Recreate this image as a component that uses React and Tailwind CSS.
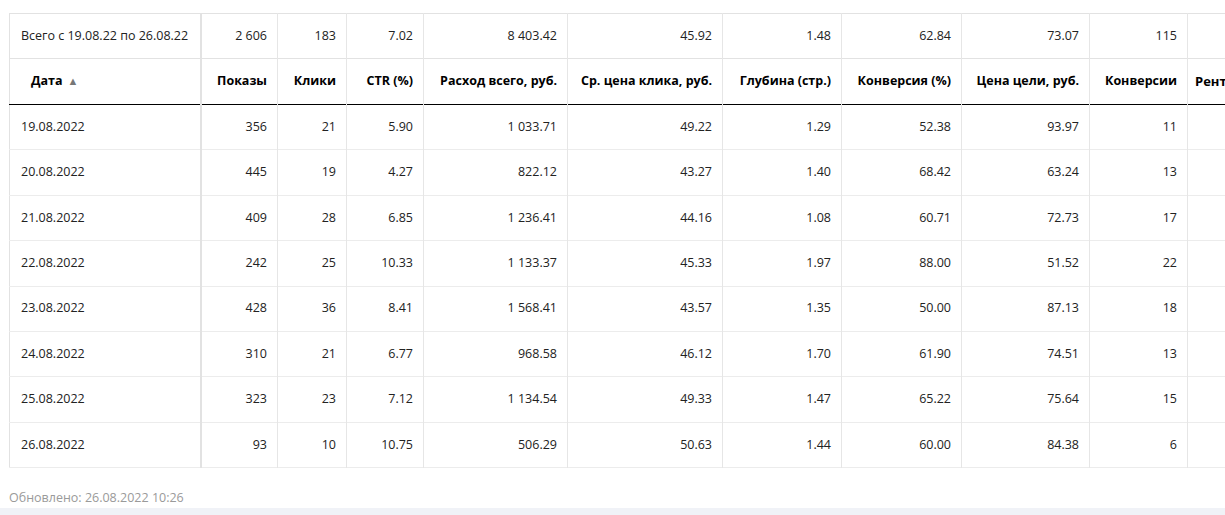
const cols = [
  { key: "date", title: "Дата", w: "w-[191px]" },
  { key: "shows", title: "Показы", w: "w-[77px]" },
  { key: "clicks", title: "Клики", w: "w-[69px]" },
  { key: "ctr", title: "CTR (%)", w: "w-[77px]" },
  { key: "spend", title: "Расход всего, руб.", w: "w-[144px]" },
  { key: "cpc", title: "Ср. цена клика, руб.", w: "w-[155px]" },
  { key: "depth", title: "Глубина (стр.)", w: "w-[119px]" },
  { key: "conv", title: "Конверсия (%)", w: "w-[120px]" },
  { key: "cpa", title: "Цена цели, руб.", w: "w-[128px]" },
  { key: "convs", title: "Конверсии", w: "w-[98px]" },
  { key: "rev", title: "Рентабельность", w: "w-[160px]" },
];

const total = ["Всего с 19.08.22 по 26.08.22", "2 606", "183", "7.02", "8 403.42", "45.92", "1.48", "62.84", "73.07", "115", ""];

const rows = [
  ["19.08.2022", "356", "21", "5.90", "1 033.71", "49.22", "1.29", "52.38", "93.97", "11", ""],
  ["20.08.2022", "445", "19", "4.27", "822.12", "43.27", "1.40", "68.42", "63.24", "13", ""],
  ["21.08.2022", "409", "28", "6.85", "1 236.41", "44.16", "1.08", "60.71", "72.73", "17", ""],
  ["22.08.2022", "242", "25", "10.33", "1 133.37", "45.33", "1.97", "88.00", "51.52", "22", ""],
  ["23.08.2022", "428", "36", "8.41", "1 568.41", "43.57", "1.35", "50.00", "87.13", "18", ""],
  ["24.08.2022", "310", "21", "6.77", "968.58", "46.12", "1.70", "61.90", "74.51", "13", ""],
  ["25.08.2022", "323", "23", "7.12", "1 134.54", "49.33", "1.47", "65.22", "75.64", "15", ""],
  ["26.08.2022", "93", "10", "10.75", "506.29", "50.63", "1.44", "60.00", "84.38", "6", ""],
];

function cellCls(i) {
  const border = i === 0 ? "border-r-2 border-r-[#e2e2e2]" : "border-r border-r-[#e6e6e6]";
  const align = i === 0 ? "text-left pl-[11px]" : i === 10 ? "text-left pl-[7px]" : "text-right pr-[10px]";
  return `${border} ${align} whitespace-nowrap overflow-hidden`;
}

export default function App() {
  return (
    <div className="w-[1225px] h-[515px] bg-white overflow-hidden flex flex-col text-[#222]" style={{ fontFamily: '"Open Sans", "Noto Sans", sans-serif' }}>
      <div className="pl-[9px] pt-[13px] pb-[1px] overflow-hidden">
        <table className="table-fixed border-collapse border border-[#e2e2e2] w-[1338px] text-[12.5px]">
          <colgroup>
            {cols.map((c) => (
              <col key={c.key} className={c.w} />
            ))}
          </colgroup>
          <tbody>
            <tr className="h-[45px] border-b border-b-[#e2e2e2]">
              {total.map((v, i) => (
                <td key={i} className={cellCls(i)}>{v}</td>
              ))}
            </tr>
            <tr className="h-[46px] border-b border-b-black">
              {cols.map((c, i) => (
                <th key={c.key} className={`${cellCls(i)} font-bold text-black ${i === 0 ? "pl-[21px]" : ""} ${i === 10 ? "text-[13px]" : ""}`}>
                  {c.title}
                  {i === 0 && <span className="ml-[5px] text-[11px] text-[#777]">▲</span>}
                </th>
              ))}
            </tr>
            {rows.map((r, ri) => (
              <tr key={ri} className="h-[45.4px] border-b border-b-[#ececec]">
                {r.map((v, i) => (
                  <td key={i} className={cellCls(i)}>{v}</td>
                ))}
              </tr>
            ))}
          </tbody>
        </table>
      </div>
      <div className="pl-[9px] pt-[21px] text-[12.5px] text-[#9a9a9a]">Обновлено: 26.08.2022 10:26</div>
      <div className="mt-auto h-[7px] bg-[#f0f2f7]" />
    </div>
  );
}
